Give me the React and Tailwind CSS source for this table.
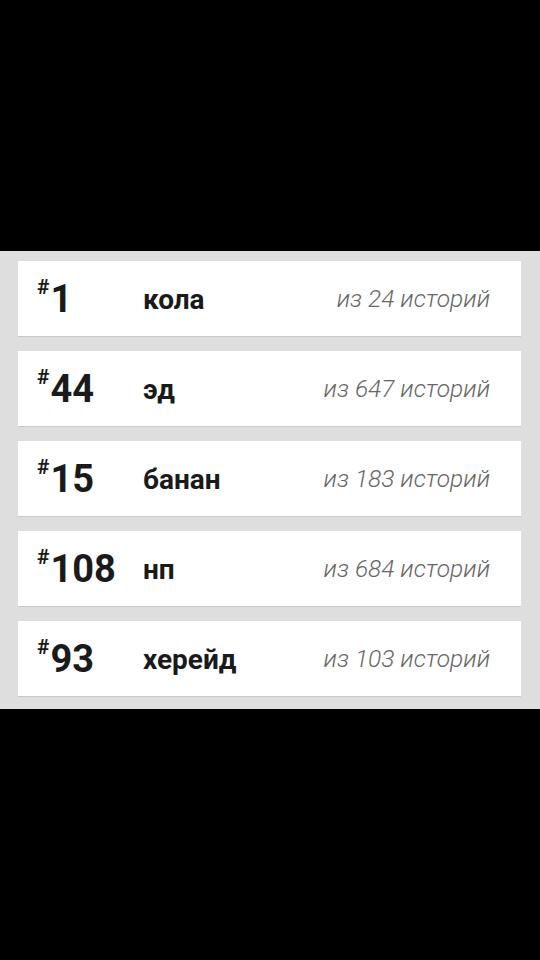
import React from 'react';

const ranks = [
  { rank: 1, name: 'кола', total: 24 },
  { rank: 44, name: 'эд', total: 647 },
  { rank: 15, name: 'банан', total: 183 },
  { rank: 108, name: 'нп', total: 684 },
  { rank: 93, name: 'херейд', total: 103 },
];

const RankCard = ({ rank, name, total }) => (
  <div className="flex h-[76px] items-center bg-white border-b border-[#c9c9c9] pl-[19px] pr-[31px]">
    <div className="flex w-[106px] items-start">
      <span className="mt-[-3px] mr-[1px] text-[21px] font-bold leading-none text-[#1a1a1a]">#</span>
      <span className="text-[38px] font-bold leading-none text-[#1a1a1a]">{rank}</span>
    </div>
    <div className="flex-1 pt-[2px] text-[28px] font-bold leading-none text-[#1a1a1a]">{name}</div>
    <div className="pt-[2px] text-[24.5px] font-light italic leading-none text-[#666666]">из {total} историй</div>
  </div>
);

export default function App() {
  return (
    <div className="flex h-[960px] w-[540px] flex-col bg-black" style={{ fontFamily: 'Roboto, "Noto Sans", sans-serif' }}>
      <div className="h-[251px]" />
      <div className="flex flex-col gap-[14px] bg-[#dedede] pt-[10px] pb-[12px] pl-[18px] pr-[19px]">
        {ranks.map(r => (
          <RankCard key={r.rank} {...r} />
        ))}
      </div>
    </div>
  );
}
